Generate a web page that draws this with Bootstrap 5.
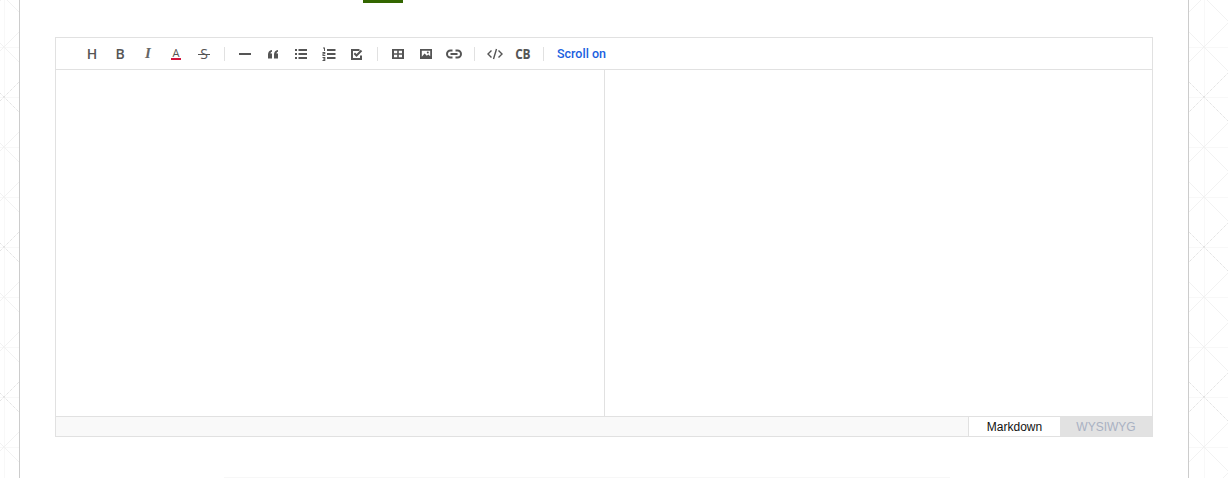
<!DOCTYPE html>
<html lang="en">
<head>
    <meta charset="UTF-8">
    <meta name="viewport" content="width=device-width, initial-scale=1.0">
    <title>Editor</title>
    <link href="https://cdn.jsdelivr.net/npm/bootstrap@5.3.0/dist/css/bootstrap.min.css" rel="stylesheet">
    <style>
        html, body { height: 478px; overflow: hidden; }
        body {
            background-color: #fff;
            background-image: url("data:image/svg+xml,%3Csvg xmlns='http://www.w3.org/2000/svg' width='50' height='150'%3E%3Cg fill='none' stroke-width='1'%3E%3Cpath stroke='%23f8f8f8' d='M4.500 0V150M0 47.500H50M0 97.500H50M0 147.500H50'/%3E%3Cpath stroke='%23f2f2f2' d='M-21 22L29 72M29 22L-21 72M29 22L79 72M79 22L29 72M-21 122L29 172M29 122L-21 172M29 122L79 172M79 122L29 172M-21 -28L29 22M29 -28L-21 22M29 -28L79 22M79 -28L29 22'/%3E%3Cpath stroke='%23d8d8d8' stroke-dasharray='1 1' d='M-21 72L29 122M29 72L-21 122M29 72L79 122M79 72L29 122'/%3E%3C/g%3E%3C/svg%3E");
            font-family: "Liberation Sans", Arial, sans-serif;
        }
        .sheet { width: 1170px; height: 478px; margin-left: 19px; background: #fff; border-left: 1px solid #ccc; border-right: 1px solid #ccc; }
        .green-tab { width: 40px; height: 3px; background: #336600; margin-left: 343px; }
        .md-editor { width: 1098px; height: 400px; margin: 34px 0 0 35px; border: 1px solid #e1e1e1; }
        .md-toolbar { height: 32px; padding-left: 22px; border-bottom: 1px solid #e1e1e1; }
        .tool { width: 28px; height: 28px; color: #555; }
        .tool-letter { font-family: "Open Sans", sans-serif; font-weight: 600; font-size: 14px; line-height: 1; }
        .tool-i { font-family: "Liberation Serif", serif; font-style: italic; font-weight: 700; font-size: 15px; color: #666; }
        .tool-a { font-size: 11px; font-weight: 400; border-bottom: 2px solid #d3143d; width: 10px; text-align: center; height: 13px; }
        .tool-s { font-weight: 400; width: 12px; text-align: center; background: linear-gradient(#555, #555) 0 7px / 12px 1px no-repeat; }
        .tool-cb { font-weight: 700; letter-spacing: -.5px; transform: scaleX(.85); }
        .tool-sep { width: 1px; height: 14px; background: #e1e1e1; margin: 0 6px; }
        .scroll-toggle { margin: 2px 0 0 7px; color: #1a5fe0; font-family: Roboto, sans-serif; font-weight: 500; font-size: 12.5px; }
        .md-panes { height: 346px; }
        .md-pane { width: 548px; }
        .md-pane-right { flex: 1; border-left: 1px solid #e1e1e1; }
        .md-modes { height: 20px; background: #f9f9f9; border-top: 1px solid #e1e1e1; font-size: 12px; }
        .mode-tab { width: 92px; height: 19px; }
        .mode-active { background: #fff; border-left: 1px solid #e1e1e1; color: #111; }
        .mode-idle { background: #e2e2e2; color: #a9b1c2; }
        .foot-line { width: 726px; height: 1px; background: #f7f7f7; margin: 40px 0 0 204px; }
    </style>
</head>
<body>
    <div class="sheet">
        <div class="green-tab"></div>
        <div class="md-editor">
            <!-- Barra de herramientas -->
            <div class="md-toolbar d-flex align-items-center">
                <div class="tool d-flex align-items-center justify-content-center"><span class="tool-letter">H</span></div>
                <div class="tool d-flex align-items-center justify-content-center"><span class="tool-letter">B</span></div>
                <div class="tool d-flex align-items-center justify-content-center"><span class="tool-letter tool-i">I</span></div>
                <div class="tool d-flex align-items-center justify-content-center"><span class="tool-letter tool-a">A</span></div>
                <div class="tool d-flex align-items-center justify-content-center"><span class="tool-letter tool-s">S</span></div>
                <div class="tool-sep"></div>
                <div class="tool d-flex align-items-center justify-content-center">
                    <svg width="14" height="14" viewBox="0 0 14 14" fill="#555"><rect x="1" y="6" width="12" height="2"/></svg>
                </div>
                <div class="tool d-flex align-items-center justify-content-center">
                    <svg width="14" height="14" viewBox="0 0 14 14" fill="#555"><path d="M2 11.500V7.500C2 5.200 3.200 3.500 6 3V4.700C4.900 5 4.500 5.600 4.500 6.500H6V11.500ZM8 11.500V7.500C8 5.200 9.200 3.500 12 3V4.700C10.900 5 10.500 5.600 10.500 6.500H12V11.500Z"/></svg>
                </div>
                <div class="tool d-flex align-items-center justify-content-center">
                    <svg width="14" height="14" viewBox="0 0 14 14" fill="#555"><path d="M1 2h2v2H1zM1 6h2v2H1zM1 10h2v2H1zM4.500 2h8.500v2H4.500zM4.500 6h8.500v2H4.500zM4.500 10h8.500v2H4.500z"/></svg>
                </div>
                <div class="tool d-flex align-items-center justify-content-center">
                    <svg width="14" height="14" viewBox="0 0 14 14" fill="#555"><path d="M5 2h8.500v2H5zM5 6h8.500v2H5zM5 10h8.500v2H5zM1 0.500h2v3.500H2V1.500H1zM.5 5h2.800v2.200H1.500v.8h1.800v1H.5V6.300h1.800V6H.5zM.5 10h2.800v4H.5v-1h1.800v-.5H1v-.9h1.300V11H.5z"/></svg>
                </div>
                <div class="tool d-flex align-items-center justify-content-center">
                    <svg width="14" height="14" viewBox="0 0 14 14" fill="none" stroke="#555" stroke-width="2"><path d="M9.500 3H2v9h9V8.500"/><path d="M4.300 6.300l2.200 2.200 5-5"/></svg>
                </div>
                <div class="tool-sep"></div>
                <div class="tool d-flex align-items-center justify-content-center">
                    <svg width="14" height="14" viewBox="0 0 14 14" fill="#555"><path d="M1 2h12v10H1zM3 3.800v2.400h3.200V3.800zM7.800 3.800v2.400H11V3.800zM3 7.800v2.400h3.200V7.800zM7.800 7.800v2.400H11V7.800z" fill-rule="evenodd"/></svg>
                </div>
                <div class="tool d-flex align-items-center justify-content-center">
                    <svg width="14" height="14" viewBox="0 0 14 14" fill="#555"><path d="M1 2h12v10H1zM2.800 3.700v6l2.800-3.200 2.200 2.200 1.500-1.300 1.900 1.800V3.700z" fill-rule="evenodd"/><circle cx="8.800" cy="5.500" r="1"/></svg>
                </div>
                <div class="tool d-flex align-items-center justify-content-center">
                    <svg width="16" height="14" viewBox="0 0 16 14" fill="none" stroke="#555" stroke-width="2"><path d="M6.500 3.500H4.500a3.500 3.500 0 0 0 0 7h2M9.500 3.500h2a3.500 3.500 0 0 1 0 7h-2M4.500 7h7"/></svg>
                </div>
                <div class="tool-sep"></div>
                <div class="tool d-flex align-items-center justify-content-center">
                    <svg width="16" height="14" viewBox="0 0 16 14" fill="none" stroke="#555" stroke-width="1.400"><path d="M4.500 3.500L1 7l3.500 3.500M11.500 3.500L15 7l-3.500 3.500M9.500 2L6.500 12"/></svg>
                </div>
                <div class="tool d-flex align-items-center justify-content-center"><span class="tool-letter tool-cb">CB</span></div>
                <div class="tool-sep"></div>
                <span class="scroll-toggle">Scroll on</span>
            </div>
            <!-- Paneles -->
            <div class="md-panes d-flex">
                <div class="md-pane"></div>
                <div class="md-pane-right"></div>
            </div>
            <!-- Modo -->
            <div class="md-modes d-flex justify-content-end">
                <div class="mode-tab mode-active d-flex align-items-center justify-content-center">Markdown</div>
                <div class="mode-tab mode-idle d-flex align-items-center justify-content-center">WYSIWYG</div>
            </div>
        </div>
        <div class="foot-line"></div>
    </div>
    <script src="https://cdn.jsdelivr.net/npm/bootstrap@5.3.0/dist/js/bootstrap.bundle.min.js"></script>
</body>
</html>
